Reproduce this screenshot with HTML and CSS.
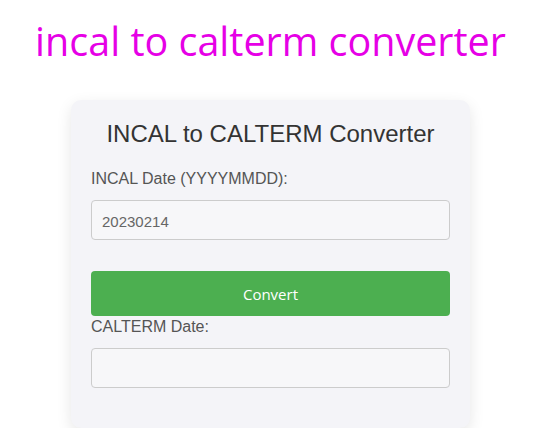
FILE: index.html
```html
<!DOCTYPE html>
<html lang="en">
<head>
  <meta charset="UTF-8">
  <meta name="viewport" content="width=device-width, initial-scale=1.0">
  <title>incal to calterm converter</title>
  <link rel="stylesheet" href="styles.css">
</head>
<body>
  <h1 class="page-title">incal to calterm converter</h1>
  <div class="converter">
    <h2>INCAL to CALTERM Converter</h2>
    <label for="incal">INCAL Date (YYYYMMDD):</label>
    <input type="text" id="incal" value="20230214">
    <button id="convert">Convert</button>
    <label for="calterm">CALTERM Date:</label>
    <input type="text" id="calterm" readonly>
  </div>
</body>
</html>
```

FILE: styles.css
```css
body {
  font-family: 'Liberation Sans', Arial, sans-serif;
  background: #fff;
  margin: 8px;
  padding-right: 17px;
}
.page-title {
  font-family: 'Open Sans', 'Noto Sans', sans-serif;
  font-weight: normal;
  font-size: 39.5px;
  color: #e600e6;
  text-align: center;
  margin: 6px 0 32px;
  line-height: 54px;
}
.converter {
  width: 359px;
  margin: 0 auto;
  padding: 20px;
  background: #f4f4f8;
  border-radius: 10px;
  box-shadow: 0 5px 15px rgba(0, 0, 0, 0.1);
}
.converter h2 {
  font-weight: normal;
  font-size: 24px;
  color: #333;
  text-align: center;
  margin: 0 0 22px;
}
.converter label {
  display: block;
  font-size: 16px;
  color: #555;
  margin-bottom: 12px;
}
.converter input {
  display: block;
  box-sizing: border-box;
  width: 100%;
  height: 40px;
  padding: 2px 10px 0;
  font-family: 'Liberation Sans', Arial, sans-serif;
  font-size: 15px;
  color: #666;
  background: #f7f7f9;
  border: 1px solid #ccc;
  border-radius: 4px;
  margin-bottom: 20px;
}
.converter button {
  display: block;
  width: 100%;
  height: 45px;
  margin: 31px 0 2px;
  border: none;
  border-radius: 4px;
  background: #4caf50;
  color: #fff;
  font-family: 'Open Sans', 'Noto Sans', sans-serif;
  font-size: 15px;
}
```
